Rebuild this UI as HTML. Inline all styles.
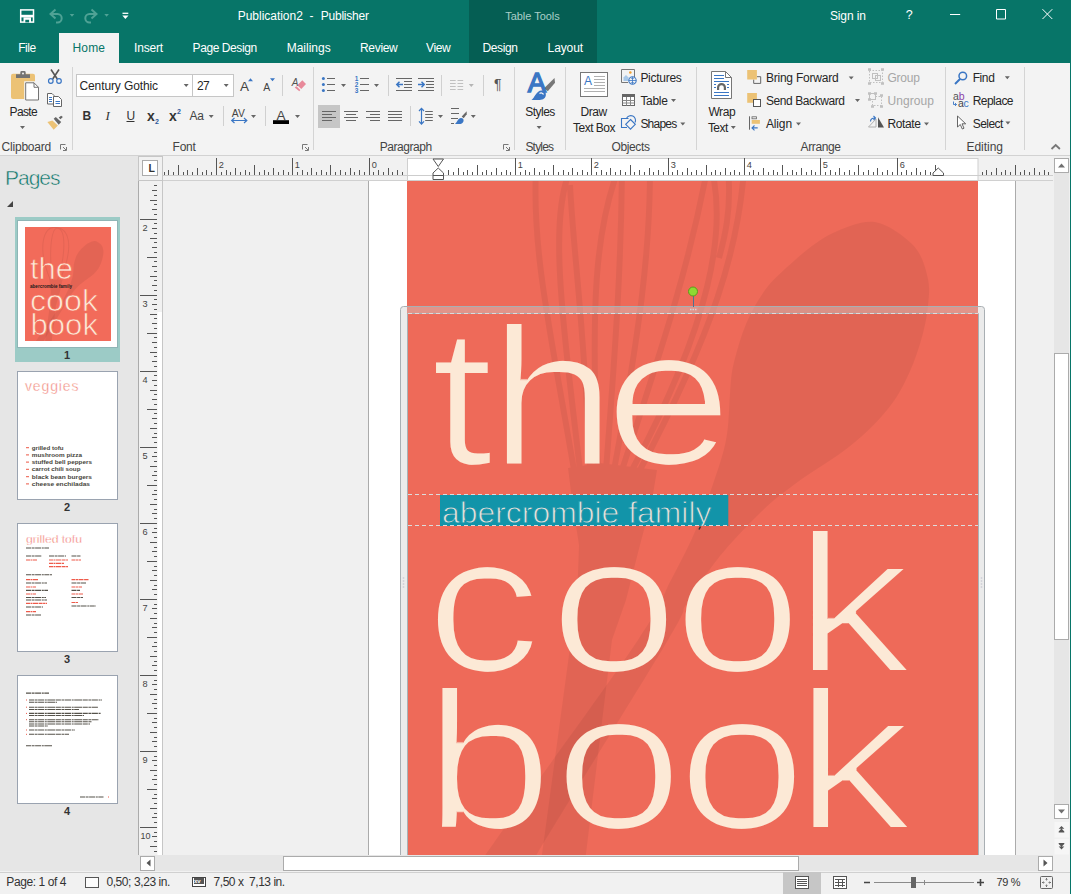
<!DOCTYPE html>
<html><head><meta charset="utf-8"><title>Publication2 - Publisher</title>
<style>
*{box-sizing:border-box;margin:0;padding:0}
html,body{width:1071px;height:894px;overflow:hidden;background:#f1f1f1;font-family:"Liberation Sans",sans-serif;font-size:12px;color:#262626}
.a{position:absolute}
.t{position:absolute;white-space:nowrap;line-height:1}
#title{left:0;top:0;width:1071px;height:63px;background:#077568}
#tt{left:469px;top:0;width:128px;height:63px;background:#055e53}
.w{color:#fff}
#hometab{left:59px;top:33px;width:60px;height:30px;background:#f3f3f3}
#ribbon{left:0;top:63px;width:1071px;height:92px;background:#f3f3f3}
#ribline{left:0;top:155px;width:1071px;height:1px;background:#d2d2d2}
.sep{position:absolute;width:1px;background:#d4d4d4;top:67px;height:83px}
.gl{position:absolute;white-space:nowrap;line-height:1;font-size:12px;color:#444;top:141px;transform:translateX(-50%)}
.rb{font-size:12.5px;color:#262626}
.dis{color:#a6a6a6}
#pages{left:0;top:156px;width:138px;height:715px;background:#e6e6e6}
#work{left:138px;top:156px;width:933px;height:715px;background:#f0f0f0}
#status{left:0;top:871px;width:1071px;height:23px;background:#f1f1f1}
</style></head><body>
<!-- TITLE BAR -->
<div id="title" class="a"></div>
<div id="tt" class="a"></div>
<!-- TABS -->
<div id="hometab" class="a"></div>
<!-- RIBBON -->
<div id="ribbon" class="a"></div>
<div id="ribline" class="a"></div>
<div class="a" style="left:76px;top:74px;width:117px;height:23px;background:#fff;border:1px solid #c6c6c6"></div>
<div class="a" style="left:192px;top:74px;width:42px;height:23px;background:#fff;border:1px solid #c6c6c6"></div>
<div class="a" style="left:318px;top:105px;width:22px;height:23px;background:#c6c6c6"></div>
<svg class="a" style="left:0;top:0" width="1071" height="156" viewBox="0 0 1071 156">
<path d="M20.0 126.0h5l-2.500 3zM183.7 84.0h5l-2.500 3zM223.7 84.0h5l-2.500 3zM208.7 115.1h5l-2.500 3zM251.0 115.1h5l-2.500 3zM295.0 115.1h5l-2.500 3zM341.0 83.9h5l-2.500 3zM374.0 83.9h5l-2.500 3zM438.0 115.1h5l-2.500 3zM470.8 115.1h5l-2.500 3zM536.6 126.0h5l-2.500 3zM671.0 99.1h5l-2.500 3zM680.3 122.5h5l-2.500 3zM730.8 126.0h5l-2.500 3zM848.7 76.5h5l-2.500 3zM855.0 99.1h5l-2.500 3zM796.0 122.5h5l-2.500 3zM924.0 122.5h5l-2.500 3zM1004.8 76.2h5l-2.500 3zM1005.4 121.5h5l-2.500 3z" fill="#666"/>
<path d="M468.800 84h5l-2.500 3z" fill="#b5b5b5"/>
<g fill="none" stroke-linecap="butt">
<!-- paste -->
<rect x="11" y="73.700" width="24" height="25.300" rx="2" fill="#ecc275"/>
<path d="M16 74.300h4.300v-1.800a1.400 1.400 0 0 1 1.400-1.400h2.600a1.400 1.400 0 0 1 1.400 1.400v1.800h4.300v3.800h-14z" fill="#737373"/>
<circle cx="23" cy="73.600" r="1" fill="#f3f3f3"/>
<path d="M24.200 81.300h10.800l5 5v15.200h-15.800z" fill="#f3f3f3"/>
<path d="M25.700 82.800h8.300l4.500 4.500v12.700h-12.800z" fill="#fff" stroke="#737373"/>
<path d="M34 82.800v4.500h4.500" stroke="#737373"/>
<!-- cut -->
<path d="M51 69.500l6.300 9.500M59 69.500l-6.300 9.500" stroke="#555" stroke-width="1.600"/>
<circle cx="50.800" cy="81" r="2.300" stroke="#3a76c4" stroke-width="1.200"/>
<circle cx="59" cy="81" r="2.300" stroke="#3a76c4" stroke-width="1.200"/>
<!-- copy -->
<path d="M47.500 93.500h4.500l2 2v8.500h-6.500z" fill="#fff" stroke="#666"/>
<path d="M53.500 96.500h5l3 3v7h-8z" fill="#fff" stroke="#666"/>
<path d="M49 97.500h3M49 99.500h3M49 101.500h3M55.500 101.500h4.500M55.500 103.500h4.500" stroke="#3a76c4"/>
<!-- format painter -->
<path d="M47.400 122.100l6.300 7.600 4.200-4.200-5.500-5z" fill="#ecc275"/>
<path d="M53.700 118.800l5 5.900 2.500-2.600-5.400-5z" fill="#666"/>
<path d="M58.700 117.500l1.700 1.700 2.500-2.100-1.700-1.400z" fill="#666"/>
<!-- launchers -->
<path d="M60.500 149.500v-5h5M63 147l3 3M66.500 147v3.500h-3.500M302.500 149.500v-5h5M305 147l3 3M308.500 147v3.500h-3.500M503.500 149.500v-5h5M506 147l3 3M509.500 147v3.500h-3.500" stroke="#777"/>
<!-- grow/shrink font triangles -->
<path d="M248 81.200l2.500-3 2.500 3zM270 78.200h5l-2.500 3z" fill="#3a76c4"/>
<!-- clear formatting eraser -->
<path d="M302.300 80.300l3.700 3.700-4.700 5-4-3.800z" fill="#e8899a"/>
<path d="M296.400 86.300l3.900 3.700-1 1.200-4.600-3.800z" fill="#e8899a"/>
<!-- AV arrow -->
<path d="M232 120.500h14.500M234.500 118l-2.800 2.500 2.800 2.500M244 118l2.800 2.500-2.800 2.500" stroke="#3a76c4" stroke-width="1.200"/>
<!-- font color bar -->
<rect x="273" y="120.200" width="16" height="3.800" fill="#000"/>
<!-- bullets -->
<circle cx="323.400" cy="78.500" r="1.500" fill="#3a76c4"/><circle cx="323.400" cy="84.500" r="1.500" fill="#3a76c4"/><circle cx="323.400" cy="90.500" r="1.500" fill="#3a76c4"/>
<path d="M327 78.500h8M327 84.500h8M327 90.500h8M360 78.500h9M360 84.500h9M360 90.500h9" stroke="#666"/>
<!-- decrease indent -->
<path d="M396 78.500h16M404 81.500h8M404 84.500h8M404 87.500h8M396 90.500h16M418 78.500h16M426 81.500h8M426 84.500h8M426 87.500h8M418 90.500h16" stroke="#666"/>
<path d="M397 84.500h6M399.500 81.800l-2.700 2.700 2.700 2.700M418 84.500h6M421.500 81.800l2.700 2.700-2.700 2.700" stroke="#3a76c4" stroke-width="1.500"/>
<!-- columns disabled -->
<path d="M450 80.500h5.700M450 83.500h5.700M450 86.500h5.700M450 89.500h5.700M457.500 80.500h5.700M457.500 83.500h5.700M457.500 86.500h5.700M457.500 89.500h5.700" stroke="#c0c0c0"/>
<!-- align icons -->
<path d="M322 111.500h14M322 114.500h10M322 117.500h14M322 120.500h10M344 111.500h14M346 114.500h10M344 117.500h14M346 120.500h10M366 111.500h14M370 114.500h10M366 117.500h14M370 120.500h10M388 111.500h14M388 114.500h14M388 117.500h14M388 120.500h14" stroke="#666"/>
<!-- line spacing -->
<path d="M425.200 111.500h7.600M425.200 114.500h7.600M425.200 117.500h7.600M425.200 120.500h7.600" stroke="#666"/>
<path d="M421.500 108.500v15.500M419 111l2.500-2.700 2.500 2.700M419 121.300l2.500 2.700 2.500-2.700" stroke="#3a76c4" stroke-width="1.200"/>
<!-- shading -->
<path d="M451 108.500h8M451 113.500h8M451 118.500h7M451 123.500h3" stroke="#666"/>
<path d="M466.700 111.200l-5 5.300 2 1.800 3-4z" fill="#666"/>
<path d="M455 124c2-1.500 3-6 6-6 2 0 3 1.500 2.500 3.200-0.500 2-2.500 2.800-4.500 2.800z" fill="#3a76c4"/>
<!-- styles big icon -->
<path d="M554.500 78l.5 4.800-7.200 8.500-3.700-3z" fill="#777"/>
<path d="M531.500 100c3-2 5-9.500 10-9.500 3.500 0 5 2.500 4.200 5.500-0.800 3-3.700 4-7.200 4z" fill="#3a76c4"/>
<path d="M539.500 93.500c1.500-1 3.500-0.500 4 1" stroke="#f3f3f3" stroke-width="1.200"/>
<!-- draw text box -->
<rect x="580.500" y="72.500" width="27" height="24" fill="#fff" stroke="#777"/>
<path d="M594 76.500h11M594 79.500h11M594 82.500h11M594 85.500h11M584 88.500h21M584 91.500h21" stroke="#b0b0b0"/>
<!-- pictures -->
<path d="M621.500 69.500h13v8M628 82.500h-6.500v-13" stroke="#777"/>
<circle cx="630.300" cy="72.500" r="1.300" fill="#f0a030"/>
<path d="M623.500 81v-3.500l2.500-2.500 2.500 2.500v3.500z" fill="#a8c8e8"/>
<circle cx="632.500" cy="80.500" r="3.700" fill="#f3f3f3" stroke="#3a76c4" stroke-width="1.100"/>
<path d="M629 80.500h7M632.500 77v7M630.500 77.800c1.300 1 2.800 1 4 0M630.500 83.200c1.300-1 2.800-1 4 0" stroke="#3a76c4" stroke-width=".8"/>
<!-- table -->
<rect x="622.500" y="94.500" width="12" height="11" fill="#fff" stroke="#666"/>
<rect x="622" y="94" width="13" height="3" fill="#666"/>
<path d="M622.500 100.500h12M622.500 103h12M626.500 97v8.500M630.500 97v8.500" stroke="#888"/>
<!-- shapes -->
<path d="M627 127.500h-5.500v-9h7" stroke="#3a76c4" stroke-width="1.100"/>
<path d="M626.500 118.500a4.700 4.700 0 1 1 8.500 4" stroke="#3a76c4" stroke-width="1.100"/>
<path d="M630.500 119.500l4.800 4.800-4.800 4.800-4.800-4.800z" fill="#f3f3f3" stroke="#3a76c4" stroke-width="1.100"/>
<!-- wrap text -->
<path d="M711.500 71.500h14l6 6v21h-20z" fill="#fff" stroke="#777"/>
<path d="M725.500 71.500v6h6" stroke="#777"/>
<path d="M714 75.500h10M714 78.500h10M714 81.500h15M714 92.500h15M714 95.500h15M714 84.500h2M727 84.500h2M714 87.500h2M727 87.500h2" stroke="#3a76c4"/>
<path d="M717 90v-2.500a4.500 4.500 0 0 1 9 0V90h-2.200v-2.500a2.300 2.300 0 0 0-4.600 0V90z" fill="#666"/>
<!-- bring forward -->
<path d="M757 76.700h3.700v6.700h-7v-3.900" stroke="#666"/>
<rect x="747.200" y="70" width="9.700" height="9.500" fill="#ecc275"/>
<!-- send backward -->
<rect x="747.200" y="93" width="9.700" height="9.800" fill="#ecc275"/>
<rect x="753.500" y="99.500" width="7" height="7" fill="#fff" stroke="#555"/>
<!-- align -->
<path d="M749.500 116.300v13.400" stroke="#666"/>
<rect x="752" y="116.800" width="4.500" height="2" stroke="#666" stroke-width=".8"/>
<rect x="751.700" y="120" width="8.200" height="3.800" fill="#ecc275"/>
<path d="M752 127.900h5.700M754.500 125.500l-2.500 2.400 2.500 2.400" stroke="#3a76c4" stroke-width="1.100"/>
<!-- group (disabled) -->
<g stroke="#c0c0c0">
<rect x="869.500" y="70.500" width="13" height="12" stroke-dasharray="1.500 1.500"/>
<rect x="872.500" y="73.500" width="5" height="5"/><rect x="875.500" y="75.500" width="5" height="5"/>
<path d="M868 69.500h3M881 69.500h3M868 83.500h3M881 83.500h3" stroke-width="2.500"/>
<rect x="872.500" y="96.500" width="9" height="9" stroke-dasharray="1.500 1.500"/>
<rect x="869.500" y="93.500" width="6" height="6" fill="#f3f3f3"/>
<path d="M868 93.500h3M874 93.500h3M868 99.500h3M880 95.500h3M871 106.500h3M880 106.500h3" stroke-width="2.500"/>
</g>
<!-- rotate -->
<path d="M876 127h-7.500l7.500-8z" stroke="#b0b0b0"/>
<path d="M878 127.500h6l-6-10.300z" fill="#555"/>
<path d="M870.500 121.500c0-2.500 2-3.500 4.500-3.500M873.500 116l2 2-2 2" stroke="#3a76c4" stroke-width="1.100"/>
<!-- find -->
<circle cx="962.800" cy="76" r="3.800" stroke="#3a76c4" stroke-width="1.500"/>
<path d="M960 79l-5 5" stroke="#3a76c4" stroke-width="2"/>
<!-- replace arrow -->
<path d="M953.500 101.500v3h3M955 103l1.500 1.500-1.500 1.500" stroke="#3a76c4" stroke-width=".9"/>
<!-- select -->
<path d="M957.500 116v11l2.800-2.500 2 4.500 1.700-0.800-2-4.400h3.700z" fill="#fff" stroke="#555" stroke-width=".9"/>
<!-- collapse caret -->
<path d="M1051.500 149l4.200-4 4.200 4" stroke="#777" stroke-width="1.800"/>
</g>
<g font-family="Liberation Sans, sans-serif" font-size="6.500" font-weight="bold" fill="#3a76c4"><text x="354.700" y="80.800">1</text><text x="354.700" y="86.800">2</text><text x="354.700" y="92.800">3</text></g>
<g fill="none">
<!-- save -->
<rect x="20.700" y="9.900" width="12.800" height="12.200" stroke="#fff" stroke-width="1.500"/>
<rect x="20.700" y="14.800" width="12.800" height="2.600" fill="#fff"/>
<path d="M23.500 17.400h7.500v4.700h-7.500z" fill="#fff"/>
<rect x="25.300" y="19.800" width="3.800" height="2.600" fill="#077568"/>
<!-- undo/redo -->
<path d="M55.500 9.500l-5 4.500 5 4.500M51 14h6.500a4.200 4.200 0 0 1 0 8.400h-1.500" stroke="#4fa295" stroke-width="2"/>
<path d="M91.500 9.500l5 4.500-5 4.500M96 14h-6.500a4.200 4.200 0 0 0 0 8.400h1.500" stroke="#4fa295" stroke-width="2"/>
<path d="M69.700 14h4.600l-2.300 2.800zM104.300 14h4.600l-2.300 2.800z" fill="#4fa295"/>
<path d="M122.500 13.300h5.800" stroke="#fff" stroke-width="1.300"/>
<path d="M122.300 15.600h6.200l-3.100 3.300z" fill="#fff"/>
<!-- window controls -->
<path d="M950 14.500h10.200M996.500 9.500h9v9.500h-9zM1042.500 9.200l9.800 9.800M1052.300 9.200l-9.800 9.800" stroke="#fff" stroke-width="1"/>
</g>

</svg>
<div class="sep" style="left:72px"></div>
<div class="sep" style="left:313px"></div>
<div class="sep" style="left:514px"></div>
<div class="sep" style="left:565px"></div>
<div class="sep" style="left:696px"></div>
<div class="sep" style="left:945px"></div>
<div class="sep" style="left:1024px"></div>
<div class="a" style="left:282px;top:75px;width:1px;height:21px;background:#d0d0d0"></div>
<div class="a" style="left:388px;top:75px;width:1px;height:21px;background:#d0d0d0"></div>
<div class="a" style="left:441px;top:75px;width:1px;height:21px;background:#d0d0d0"></div>
<div class="a" style="left:483px;top:75px;width:1px;height:21px;background:#d0d0d0"></div>
<div class="a" style="left:223px;top:106px;width:1px;height:20px;background:#d0d0d0"></div>
<div class="a" style="left:265px;top:106px;width:1px;height:20px;background:#d0d0d0"></div>
<div class="a" style="left:410px;top:106px;width:1px;height:20px;background:#d0d0d0"></div>
<div class="t" style="left:237.7px;top:10.1px;font-size:12px;color:#fff;letter-spacing:-0.02px;">Publication2</div>
<div class="t" style="left:309.5px;top:10.1px;font-size:12px;color:#fff;letter-spacing:-0.20px;">-</div>
<div class="t" style="left:320.8px;top:10.1px;font-size:12px;color:#fff;letter-spacing:-0.24px;">Publisher</div>
<div class="t" style="left:505.2px;top:10.9px;font-size:11px;color:#a9cfc8;letter-spacing:-0.03px;">Table Tools</div>
<div class="t" style="left:829.9px;top:9.7px;font-size:12px;color:#fff;letter-spacing:-0.11px;">Sign in</div>
<div class="t" style="left:905.8px;top:9.3px;font-size:12.5px;color:#fff;letter-spacing:-1.45px;">?</div>
<div class="t" style="left:18.2px;top:42.0px;font-size:12px;color:#fff;letter-spacing:-0.43px;">File</div>
<div class="t" style="left:72.5px;top:42.0px;font-size:12px;color:#077568;letter-spacing:0.15px;">Home</div>
<div class="t" style="left:134.1px;top:42.0px;font-size:12px;color:#fff;letter-spacing:-0.20px;">Insert</div>
<div class="t" style="left:192.6px;top:42.0px;font-size:12px;color:#fff;letter-spacing:-0.42px;">Page Design</div>
<div class="t" style="left:286.7px;top:42.0px;font-size:12px;color:#fff;letter-spacing:-0.01px;">Mailings</div>
<div class="t" style="left:360.0px;top:42.0px;font-size:12px;color:#fff;letter-spacing:-0.32px;">Review</div>
<div class="t" style="left:426.1px;top:42.0px;font-size:12px;color:#fff;letter-spacing:-0.40px;">View</div>
<div class="t" style="left:482.4px;top:42.0px;font-size:12px;color:#fff;letter-spacing:-0.36px;">Design</div>
<div class="t" style="left:547.6px;top:42.0px;font-size:12px;color:#fff;letter-spacing:-0.12px;">Layout</div>
<div class="t" style="left:1.6px;top:141.0px;font-size:12px;color:#444;letter-spacing:-0.22px;">Clipboard</div>
<div class="t" style="left:172.6px;top:141.0px;font-size:12px;color:#444;letter-spacing:-0.25px;">Font</div>
<div class="t" style="left:379.7px;top:141.0px;font-size:12px;color:#444;letter-spacing:-0.45px;">Paragraph</div>
<div class="t" style="left:525.4px;top:141.0px;font-size:12px;color:#444;letter-spacing:-0.80px;">Styles</div>
<div class="t" style="left:611.5px;top:141.0px;font-size:12px;color:#444;letter-spacing:-0.38px;">Objects</div>
<div class="t" style="left:800.5px;top:141.0px;font-size:12px;color:#444;letter-spacing:-0.37px;">Arrange</div>
<div class="t" style="left:966.5px;top:141.0px;font-size:12px;color:#444;letter-spacing:-0.03px;">Editing</div>
<div class="t" style="left:9.6px;top:106.1px;font-size:12px;color:#262626;letter-spacing:-0.68px;">Paste</div>
<div class="t" style="left:79.5px;top:80.2px;font-size:12px;color:#262626;letter-spacing:-0.11px;">Century Gothic</div>
<div class="t" style="left:197.0px;top:80.2px;font-size:12px;color:#262626;letter-spacing:-0.67px;">27</div>
<div class="t" style="left:82.5px;top:110.2px;font-size:12px;color:#333;letter-spacing:-1.17px;font-weight:bold;">B</div>
<div class="t" style="left:105.5px;top:109.4px;font-size:13px;color:#333;letter-spacing:0.89px;font-style:italic;font-family:&quot;Liberation Serif&quot;,serif;">I</div>
<div class="t" style="left:126.5px;top:109.7px;font-size:12px;color:#333;letter-spacing:-0.67px;text-decoration:underline;">U</div>
<div class="t" style="left:147.0px;top:108.5px;font-size:14px;color:#333;letter-spacing:-0.79px;font-weight:bold;">x</div>
<div class="t" style="left:155.0px;top:117.5px;font-size:7px;color:#2b579a;letter-spacing:-0.19px;font-weight:bold;">2</div>
<div class="t" style="left:169.0px;top:108.5px;font-size:14px;color:#333;letter-spacing:-0.79px;font-weight:bold;">x</div>
<div class="t" style="left:177.0px;top:108.0px;font-size:7px;color:#2b579a;letter-spacing:-0.39px;font-weight:bold;">2</div>
<div class="t" style="left:189.5px;top:110.2px;font-size:12px;color:#444;letter-spacing:-0.24px;">Aa</div>
<div class="t" style="left:231.7px;top:108.5px;font-size:10.3px;color:#444;letter-spacing:0.16px;">AV</div>
<div class="t" style="left:240.1px;top:79.8px;font-size:13.5px;color:#444;letter-spacing:0.60px;">A</div>
<div class="t" style="left:263.2px;top:82.3px;font-size:10.5px;color:#444;letter-spacing:0.60px;">A</div>
<div class="t" style="left:276.6px;top:108.8px;font-size:13.5px;color:#444;letter-spacing:0.30px;">A</div>
<div class="t" style="left:291.8px;top:78.1px;font-size:10px;color:#555;letter-spacing:-0.47px;font-style:italic;">A</div>
<div class="t" style="left:527.7px;top:68.8px;font-size:27.5px;color:#3a76c4;letter-spacing:-0.74px;-webkit-text-stroke:1.4px #3a76c4;">A</div>
<div class="t" style="left:584.0px;top:75.1px;font-size:12px;color:#3a76c4;letter-spacing:-0.30px;">A</div>
<div class="t" style="left:525.3px;top:106.2px;font-size:12px;color:#262626;letter-spacing:-0.53px;">Styles</div>
<div class="t" style="left:580.5px;top:106.2px;font-size:12px;color:#262626;letter-spacing:-0.48px;">Draw</div>
<div class="t" style="left:573.0px;top:121.6px;font-size:12px;color:#262626;letter-spacing:-0.50px;">Text Box</div>
<div class="t" style="left:640.4px;top:72.1px;font-size:12px;color:#262626;letter-spacing:-0.28px;">Pictures</div>
<div class="t" style="left:640.4px;top:94.9px;font-size:12px;color:#262626;letter-spacing:-0.30px;">Table</div>
<div class="t" style="left:640.4px;top:117.7px;font-size:12px;color:#262626;letter-spacing:-0.77px;">Shapes</div>
<div class="t" style="left:708.4px;top:106.2px;font-size:12px;color:#262626;letter-spacing:-0.39px;">Wrap</div>
<div class="t" style="left:707.9px;top:121.6px;font-size:12px;color:#262626;letter-spacing:-0.53px;">Text</div>
<div class="t" style="left:765.9px;top:72.1px;font-size:12px;color:#262626;letter-spacing:-0.22px;">Bring Forward</div>
<div class="t" style="left:765.9px;top:94.9px;font-size:12px;color:#262626;letter-spacing:-0.41px;">Send Backward</div>
<div class="t" style="left:765.9px;top:117.7px;font-size:12px;color:#262626;letter-spacing:-0.12px;">Align</div>
<div class="t" style="left:887.4px;top:72.1px;font-size:12px;color:#a6a6a6;letter-spacing:-0.23px;">Group</div>
<div class="t" style="left:887.4px;top:94.9px;font-size:12px;color:#a6a6a6;letter-spacing:0.08px;">Ungroup</div>
<div class="t" style="left:887.4px;top:117.7px;font-size:12px;color:#262626;letter-spacing:-0.38px;">Rotate</div>
<div class="t" style="left:972.7px;top:72.1px;font-size:12px;color:#262626;letter-spacing:-0.41px;">Find</div>
<div class="t" style="left:972.7px;top:94.9px;font-size:12px;color:#262626;letter-spacing:-0.53px;">Replace</div>
<div class="t" style="left:972.7px;top:117.7px;font-size:12px;color:#262626;letter-spacing:-0.54px;">Select</div>
<div class="t" style="left:953.0px;top:91.0px;font-size:10.5px;color:#555;letter-spacing:-0.14px;">a</div>
<div class="t" style="left:958.7px;top:91.0px;font-size:10.5px;color:#8b3fa8;letter-spacing:-0.14px;">b</div>
<div class="t" style="left:957.9px;top:98.0px;font-size:10.5px;color:#444;letter-spacing:-0.14px;">a</div>
<div class="t" style="left:963.6px;top:98.0px;font-size:10.5px;color:#3a76c4;letter-spacing:-0.15px;">c</div>
<div class="t" style="left:494.0px;top:77.3px;font-size:14px;color:#555;letter-spacing:2.48px;">¶</div>
<!-- PAGES PANEL -->
<div id="pages" class="a"></div>
<div class="t" style="left:5px;top:167px;font-size:21px;color:#0b7468;letter-spacing:-1px;-webkit-text-stroke:.5px #e6e6e6">Pages</div>
<svg class="a" style="left:0;top:156px" width="138" height="715" viewBox="0 156 138 715">
<path d="M13 201v6h-6z" fill="#444"/>
<rect x="15" y="217" width="105" height="145" fill="#9ccbc6"/>
<rect x="17.5" y="220.500" width="100" height="127" fill="#fff" stroke="#8fb5b6"/>
<rect x="25" y="227" width="86" height="114" fill="#f26b5a"/>
<clipPath id="tc"><rect x="25" y="227" width="86" height="114"/></clipPath><g clip-path="url(#tc)"><g transform="translate(-36.106 206.394) scale(0.1502 0.156)"><path d="M875 222C888 224 904 236 913 245C922 254 926 269 928 279C930 289 929 295 928 306C927 317 924 331 920 344C916 357 911 370 905 382C899 394 892 405 882 416C872 427 860 439 845 450C830 461 810 473 795 484C780 495 770 503 758 515C746 527 732 541 720 556C708 571 696 589 687 603C678 617 693 598 668 640C643 682 562 812 537 854C512 896 527 884 515 890C503 896 470 896 465 890C460 884 480 863 486 854C492 845 475 870 500 834C525 798 610 682 638 640C666 598 661 599 671 580C681 561 690 544 697 527C704 510 709 496 714 481C719 466 723 455 726 440C729 425 729 406 730 393C731 380 731 374 734 362C737 350 741 336 746 324C751 312 757 301 765 290C773 279 784 270 795 260C806 250 820 239 833 233C846 227 862 220 875 222Z" fill="#000" fill-opacity=".06"/><path d="M568 468L657 470L640 545L612 640L586 854L560 1100L520 1100L542 854L571 640L579 545Z" fill="#000" fill-opacity=".06"/><path d="M575 470C480 250 540 130 600 135C700 130 740 250 640 470M590 470C560 250 590 140 620 140C680 140 680 300 625 470" fill="none" stroke="#000" stroke-opacity=".06" stroke-width="7"/></g></g>
<g font-family="Liberation Sans, sans-serif" font-size="29.3" fill="#fce9d6" stroke="#f26b5a" stroke-width=".7">
<text x="30" y="278.7" textLength="43" lengthAdjust="spacingAndGlyphs">the</text>
<text x="30" y="311" textLength="68" lengthAdjust="spacingAndGlyphs">cook</text>
<text x="30.500" y="335.400" textLength="67.500" lengthAdjust="spacingAndGlyphs">book</text>
</g>
<text x="30" y="288" font-family="Liberation Sans, sans-serif" font-size="4.600" font-weight="bold" fill="#1a1a1a" textLength="42" lengthAdjust="spacingAndGlyphs">abercrombie family</text>
<rect x="17.500" y="371.5" width="100" height="128" fill="#fff" stroke="#9aa3b0"/>
<rect x="17.500" y="523.5" width="100" height="128" fill="#fff" stroke="#9aa3b0"/>
<rect x="17.500" y="675.5" width="100" height="128" fill="#fff" stroke="#9aa3b0"/>
<text x="25" y="391" font-family="Liberation Sans, sans-serif" font-size="14" fill="#f0786a" stroke="#fff" stroke-width=".4" textLength="53.500" lengthAdjust="spacing">veggies</text>
<g font-family="Liberation Sans, sans-serif" font-size="5.600" font-weight="bold" fill="#45443a">
<text x="31.800" y="449.5" textLength="31.7" lengthAdjust="spacingAndGlyphs">grilled tofu</text>
<text x="31.800" y="456.8" textLength="50.2" lengthAdjust="spacingAndGlyphs">mushroom pizza</text>
<text x="31.800" y="464.0" textLength="60.2" lengthAdjust="spacingAndGlyphs">stuffed bell peppers</text>
<text x="31.800" y="471.2" textLength="48.7" lengthAdjust="spacingAndGlyphs">carrot chili soup</text>
<text x="31.800" y="478.5" textLength="60.2" lengthAdjust="spacingAndGlyphs">black bean burgers</text>
<text x="31.800" y="485.8" textLength="58.2" lengthAdjust="spacingAndGlyphs">cheese enchiladas</text>
</g>
<path d="M26 447.7h3M26 454.9h3M26 462.2h3M26 469.4h3M26 476.7h3M26 483.9h3" stroke="#f0786a" stroke-width="1.2"/>
<text x="26" y="543.300" font-family="Liberation Sans, sans-serif" font-size="11.500" fill="#f0685a" stroke="#fff" stroke-width=".35" textLength="56" lengthAdjust="spacingAndGlyphs">grilled tofu</text>
<path d="M26 548H49M26 556H42M49 556H66M71.5 556H81M26 574.7H52M26 583H47M26 590.4H48M26 597.5H46M26 607H43M26 615H41M26 600H47M71.5 583H86M71.5 590.4H80M71.5 597.5H83M71.5 606H96" stroke="#55524a" stroke-width="1.100" stroke-dasharray="5 .6 3 .5 6 .7 2 .5" fill="none"/>
<path d="M26 560H37M49 560H68M71.5 560H81M49 563.3H64M49 566.6H68M26 579.7H38M26 587H36M26 594H36M26 603.4H47M26 611.6H36M71.5 579.7H89M71.5 587H82M71.5 594H83M71.5 602.5H78" stroke="#ee5a4a" stroke-width="1.200" stroke-dasharray="4 .5 2 .5 5 .6" fill="none"/>
<path d="M26 693.1H49M29 700H102M29 702.3H57M29 707.2H98M29 709.5H79M29 713.4H101M29 715.5H84M29 719.7H99M29 721.8H92M29 724H90M29 726H48M29 730H75M29 734.3H69M26 745.8H52M80 797H103.5" stroke="#55524a" stroke-width="1.100" stroke-dasharray="5 .6 3 .5 6 .7 2 .5 8 .6" fill="none"/>
<path d="M26 700h1M26 707.200h1M26 713.400h1M26 719.700h1M26 730h1M26 734.300h1M108 797h1" stroke="#ee5a4a" stroke-width="1"/>
<g font-family="Liberation Sans, sans-serif" font-size="11" font-weight="bold" fill="#333" text-anchor="middle">
<text x="67" y="359">1</text>
<text x="67" y="511">2</text>
<text x="67" y="663">3</text>
<text x="67" y="815">4</text>
</g>
</svg>
<!-- WORKSPACE -->
<div id="work" class="a"></div>
<!-- rulers frame -->
<div class="a" style="left:138px;top:156px;width:915px;height:25px;background:#f1f1f1;border-bottom:1px solid #d0d0d0"></div>
<div class="a" style="left:138px;top:156px;width:25px;height:699px;background:#f1f1f1;border-left:1px solid #ababab;border-right:1px solid #c6c6c6"></div>
<div class="a" style="left:138px;top:156px;width:25px;height:25px;background:#f1f1f1;border:1px solid #c6c6c6"></div>
<div class="a" style="left:142px;top:160px;width:16px;height:16px;background:#fff;border:1px solid #ababab"></div>
<div class="t" style="left:148.500px;top:162.500px;font-size:10.500px;font-weight:bold;color:#333">L</div>
<!-- canvas -->
<div class="a" style="left:163px;top:181px;width:890px;height:674px;background:#f0f0f0;overflow:hidden">
 <div class="a" style="left:205px;top:-1px;width:648px;height:700px;background:#fff;border:1px solid #ababab"></div>
</div>
<svg class="a" style="left:163px;top:181px" width="890" height="674" viewBox="163 181 890 674">
 <defs>
  <clipPath id="cp"><rect x="407" y="181" width="571" height="674"/></clipPath>
  <filter id="er" filterUnits="userSpaceOnUse" x="400" y="300" width="600" height="600"><feMorphology operator="erode" radius="3 1"/></filter>
 </defs>
 <rect x="407" y="181" width="571" height="674" fill="#ee6a59"/>
 <g clip-path="url(#cp)">
<!--SIL-->
  <g opacity=".05"><path d="M536 170C532 250 550 330 574 470M570 170C550 220 560 300 580 470M570 185C574 260 584 320 590 470M618 170C596 230 590 300 598 470M622 170C621 260 617 330 606 470M650 170C650 250 640 330 614 470M707 170C690 260 668 330 622 470M712 170C726 230 712 320 632 470M728 170C732 210 724 240 719 258M744 170C738 250 714 330 640 470" fill="none" stroke="#000" stroke-width="6"/>
  <path d="M568 468L600 463L657 470L652 500L640 545L626 600L612 640L586 854L582 890L538 890L542 854L571 640L577 600L579 545L572 500Z" fill="#000"/></g>
  <path d="M875 222C888 224 904 236 913 245C922 254 926 269 928 279C930 289 929 295 928 306C927 317 924 331 920 344C916 357 911 370 905 382C899 394 892 405 882 416C872 427 860 439 845 450C830 461 810 473 795 484C780 495 770 503 758 515C746 527 732 541 720 556C708 571 696 589 687 603C678 617 693 598 668 640C643 682 562 812 537 854C512 896 527 884 515 890C503 896 470 896 465 890C460 884 480 863 486 854C492 845 475 870 500 834C525 798 610 682 638 640C666 598 661 599 671 580C681 561 690 544 697 527C704 510 709 496 714 481C719 466 723 455 726 440C729 425 729 406 730 393C731 380 731 374 734 362C737 350 741 336 746 324C751 312 757 301 765 290C773 279 784 270 795 260C806 250 820 239 833 233C846 227 862 220 875 222Z" fill="#000" fill-opacity=".05"/>
<!--/SIL-->
 </g>
 <!-- big text -->
<!--BT--><g filter="url(#er)"><g font-family="Liberation Sans, sans-serif" font-size="195.31" fill="#fce9d6" transform="scale(1.1961 1)">
<text x="359.06 407.75 504.88" y="464.5">the</text>
<text x="355.31 458.91 562.42 664.06" y="671.0">cook</text>
<text x="354.20 462.92 566.01 664.56" y="827.8">book</text>
</g></g><!--/BT-->
<!--FRAME-->
 <g>
  <rect x="440" y="495" width="288.3" height="31" fill="#1294a9"/>
  <path d="M400.5 860V309.5a3 3 0 0 1 3-3H981.5a3 3 0 0 1 3 3V860H978V313.5H407.5V860Z" fill="#cfcfcf" fill-opacity=".42" stroke="none"/>
  <path d="M400.5 860V309.5a3 3 0 0 1 3-3H981.5a3 3 0 0 1 3 3V860" fill="none" stroke="#a9afb3"/>
  <path d="M407.5 860V313.5H978.5V860" fill="none" stroke="#aab1b5"/>
  <path d="M408 313.5H978M408 494.5H978M408 525.5H978" fill="none" stroke="#dcdcdc" stroke-dasharray="4 3"/>
  <path d="M693.5 296V307" stroke="#4f7190" fill="none"/>
  <circle cx="693" cy="291.5" r="4.5" fill="#8fd832" stroke="#5e9a1c"/>
  <path d="M403.500 577v2m0 1v2m0 1v2m0 1v2M981.500 577v2m0 1v2m0 1v2m0 1v2M690 309.500h1.500m1 0h1.500m1 0h1.500" stroke="#d4d4da" stroke-width="1.500" fill="none"/>
  <clipPath id="sc"><rect x="440" y="495" width="288.300" height="31"/></clipPath><text clip-path="url(#sc)" x="442" y="523.200" font-family="Liberation Sans, sans-serif" font-size="30.300" fill="#e4e0da" stroke="#1294a9" stroke-width=".9" textLength="269.500" lengthAdjust="spacingAndGlyphs">abercrombie family</text><path d="M700.500 526.500l-1.500 3" stroke="#333" stroke-width="1.500"/>
 </g>
<!--/FRAME-->
</svg>
<svg class="a" style="left:0;top:0" width="1071" height="894" viewBox="0 0 1071 894">
<rect x="407.500" y="158.500" width="570.500" height="22" fill="#fff" stroke="#cfcfcf"/>
<path d="M163 175.500H1053" stroke="#cdcdcd"/>
<rect x="157.5" y="312" width="4.5" height="543" fill="#fff"/>
<path d="M369.5 175v-17M364.5 175v-3M359.5 175v-5M354.5 175v-3M350.5 175v-7M345.5 175v-3M340.5 175v-5M335.5 175v-3M330.5 175v-10M326.5 175v-3M321.5 175v-5M316.5 175v-3M311.5 175v-7M307.5 175v-3M302.5 175v-5M297.5 175v-3M292.5 175v-17M288.5 175v-3M283.5 175v-5M278.5 175v-3M273.5 175v-7M268.5 175v-3M264.5 175v-5M259.5 175v-3M254.5 175v-10M249.5 175v-3M245.5 175v-5M240.5 175v-3M235.5 175v-7M230.5 175v-3M226.5 175v-5M221.5 175v-3M216.5 175v-17M211.5 175v-3M206.5 175v-5M202.5 175v-3M197.5 175v-7M192.5 175v-3M187.5 175v-5M183.5 175v-3M178.5 175v-10M173.5 175v-3M168.5 175v-5M164.5 175v-3M373.5 175v-3M378.5 175v-5M383.5 175v-3M388.5 175v-7M392.5 175v-3M397.5 175v-5M402.5 175v-3M448.5 175v-5M453.5 175v-3M458.5 175v-7M463.5 175v-3M467.5 175v-5M472.5 175v-3M477.5 175v-10M482.5 175v-3M486.5 175v-5M491.5 175v-3M496.5 175v-7M501.5 175v-3M506.5 175v-5M510.5 175v-3M515.5 175v-17M520.5 175v-3M525.5 175v-5M529.5 175v-3M534.5 175v-7M539.5 175v-3M544.5 175v-5M548.5 175v-3M553.5 175v-10M558.5 175v-3M563.5 175v-5M568.5 175v-3M572.5 175v-7M577.5 175v-3M582.5 175v-5M587.5 175v-3M591.5 175v-17M596.5 175v-3M601.5 175v-5M606.5 175v-3M610.5 175v-7M615.5 175v-3M620.5 175v-5M625.5 175v-3M630.5 175v-10M634.5 175v-3M639.5 175v-5M644.5 175v-3M649.5 175v-7M653.5 175v-3M658.5 175v-5M663.5 175v-3M668.5 175v-17M672.5 175v-3M677.5 175v-5M682.5 175v-3M687.5 175v-7M691.5 175v-3M696.5 175v-5M701.5 175v-3M706.5 175v-10M711.5 175v-3M715.5 175v-5M720.5 175v-3M725.5 175v-7M730.5 175v-3M734.5 175v-5M739.5 175v-3M744.5 175v-17M749.5 175v-3M753.5 175v-5M758.5 175v-3M763.5 175v-7M768.5 175v-3M773.5 175v-5M777.5 175v-3M782.5 175v-10M787.5 175v-3M792.5 175v-5M796.5 175v-3M801.5 175v-7M806.5 175v-3M811.5 175v-5M815.5 175v-3M820.5 175v-17M825.5 175v-3M830.5 175v-5M835.5 175v-3M839.5 175v-7M844.5 175v-3M849.5 175v-5M854.5 175v-3M858.5 175v-10M863.5 175v-3M868.5 175v-5M873.5 175v-3M877.5 175v-7M882.5 175v-3M887.5 175v-5M892.5 175v-3M897.5 175v-17M901.5 175v-3M906.5 175v-5M911.5 175v-3M916.5 175v-7M920.5 175v-3M925.5 175v-5M930.5 175v-3M935.5 175v-10M982.5 175v-3M986.5 175v-5M991.5 175v-3M996.5 175v-7M1001.5 175v-3M1005.5 175v-5M1010.5 175v-3M1015.5 175v-10M1020.5 175v-3M1024.5 175v-5M1029.5 175v-3M1034.5 175v-7M1039.5 175v-3M1044.5 175v-5M1048.5 175v-3M157 185.5h-3M157 190.5h-5M157 195.5h-3M157 200.5h-7M157 204.5h-3M157 209.5h-5M157 214.5h-3M157 219.5h-17M157 223.5h-3M157 228.5h-5M157 233.5h-3M157 238.5h-7M157 242.5h-3M157 247.5h-5M157 252.5h-3M157 257.5h-10M157 261.5h-3M157 266.5h-5M157 271.5h-3M157 276.5h-7M157 280.5h-3M157 285.5h-5M157 290.5h-3M157 295.5h-17M157 299.5h-3M157 304.5h-5M157 309.5h-3M157 314.5h-7M157 318.5h-3M157 323.5h-5M157 328.5h-3M157 333.5h-10M157 337.5h-3M157 342.5h-5M157 347.5h-3M157 352.5h-7M157 356.5h-3M157 361.5h-5M157 366.5h-3M157 371.5h-17M157 375.5h-3M157 380.5h-5M157 385.5h-3M157 390.5h-7M157 394.5h-3M157 399.5h-5M157 404.5h-3M157 409.5h-10M157 413.5h-3M157 418.5h-5M157 423.5h-3M157 428.5h-7M157 433.5h-3M157 437.5h-5M157 442.5h-3M157 447.5h-17M157 452.5h-3M157 456.5h-5M157 461.5h-3M157 466.5h-7M157 471.5h-3M157 475.5h-5M157 480.5h-3M157 485.5h-10M157 490.5h-3M157 494.5h-5M157 499.5h-3M157 504.5h-7M157 509.5h-3M157 513.5h-5M157 518.5h-3M157 523.5h-17M157 528.5h-3M157 532.5h-5M157 537.5h-3M157 542.5h-7M157 547.5h-3M157 551.5h-5M157 556.5h-3M157 561.5h-10M157 566.5h-3M157 570.5h-5M157 575.5h-3M157 580.5h-7M157 585.5h-3M157 589.5h-5M157 594.5h-3M157 599.5h-17M157 604.5h-3M157 608.5h-5M157 613.5h-3M157 618.5h-7M157 623.5h-3M157 627.5h-5M157 632.5h-3M157 637.5h-10M157 642.5h-3M157 646.5h-5M157 651.5h-3M157 656.5h-7M157 661.5h-3M157 665.5h-5M157 670.5h-3M157 675.5h-17M157 680.5h-3M157 684.5h-5M157 689.5h-3M157 694.5h-7M157 699.5h-3M157 703.5h-5M157 708.5h-3M157 713.5h-10M157 718.5h-3M157 722.5h-5M157 727.5h-3M157 732.5h-7M157 737.5h-3M157 741.5h-5M157 746.5h-3M157 751.5h-17M157 756.5h-3M157 760.5h-5M157 765.5h-3M157 770.5h-7M157 775.5h-3M157 779.5h-5M157 784.5h-3M157 789.5h-10M157 794.5h-3M157 798.5h-5M157 803.5h-3M157 808.5h-7M157 813.5h-3M157 817.5h-5M157 822.5h-3M157 827.5h-17M157 832.5h-3M157 836.5h-5M157 841.5h-3M157 846.5h-7M157 851.5h-3" stroke="#555" stroke-width="1" fill="none"/>
<path d="M433 159h10.500l-5.250 7.500zM438.250 168l5.250 5v2.500h-10.500v-2.500zM433 175.500h10.500v4h-10.500zM938.250 168l5.250 5v2.500h-10.500v-2.500z" fill="#fff" stroke="#555" stroke-width="1" stroke-linejoin="miter"/>
<g font-family="Liberation Sans, sans-serif" font-size="9.200" fill="#444">
<text x="371.8" y="168">0</text>
<text x="294.8" y="168">1</text>
<text x="218.8" y="168">2</text>
<text x="517.8" y="168">1</text>
<text x="593.8" y="168">2</text>
<text x="670.8" y="168">3</text>
<text x="746.8" y="168">4</text>
<text x="822.8" y="168">5</text>
<text x="899.8" y="168">6</text>
<text x="142.5" y="231.0">2</text>
<text x="142.5" y="307.0">3</text>
<text x="142.5" y="383.0">4</text>
<text x="142.5" y="459.0">5</text>
<text x="142.5" y="535.0">6</text>
<text x="142.5" y="611.0">7</text>
<text x="142.5" y="687.0">8</text>
<text x="142.5" y="763.0">9</text>
<text x="140.5" y="839.0" textLength="10" lengthAdjust="spacingAndGlyphs">10</text>
</g>
</svg>
<!-- vertical scrollbar -->
<div class="a" style="left:1053px;top:156px;width:18px;height:699px;background:#f0f0f0"></div>
<div class="a" style="left:1054px;top:172px;width:15px;height:632px;background:#e6e6e6"></div>
<div class="a" style="left:1054px;top:158px;width:15px;height:15px;background:#fff;border:1px solid #ababab"></div>
<div class="a" style="left:1054px;top:353px;width:15px;height:287px;background:#fff;border:1px solid #ababab"></div>
<div class="a" style="left:1054px;top:804px;width:15px;height:15px;background:#fff;border:1px solid #ababab"></div>
<svg class="a" style="left:1053px;top:156px" width="18" height="699" viewBox="1053 156 18 699">
 <path d="M1058 167.500l3.500-4 3.500 4zM1058 809.500l3.500 4 3.500-4z" fill="#707070"/>
 <rect x="1054.500" y="822" width="14.500" height="15.500" fill="#f6f6f6"/><rect x="1054.500" y="839" width="14.500" height="15.500" fill="#f6f6f6"/><path d="M1058.700 828.800l2.800-2.800 2.800 2.800zM1058.700 831.400l2.800-2.800 2.800 2.800zM1058.700 831.400h5.600v1h-5.600zM1058.700 843h5.600v1h-5.600zM1058.700 844l2.800 2.800 2.800-2.800zM1058.700 846.600l2.800 2.800 2.800-2.800z" fill="#555"/>
</svg>
<!-- horizontal scrollbar -->
<div class="a" style="left:138px;top:855px;width:933px;height:16px;background:#e6e6e6"></div>
<div class="a" style="left:1053px;top:855px;width:18px;height:16px;background:#f0f0f0"></div>
<div class="a" style="left:140px;top:856px;width:15px;height:15px;background:#fff;border:1px solid #ababab"></div>
<div class="a" style="left:1038px;top:856px;width:15px;height:15px;background:#fff;border:1px solid #ababab"></div>
<div class="a" style="left:283px;top:856px;width:516px;height:15px;background:#fff;border:1px solid #ababab"></div>
<svg class="a" style="left:138px;top:855px" width="933" height="16" viewBox="138 855 933 16">
 <path d="M1043.500 859.500l4 3.500-4 3.500zM150.500 859.500l-4 3.500 4 3.500z" fill="#555"/>
</svg>


<!-- STATUS -->
<div id="status" class="a"></div>
<div class="a" style="left:0;top:871.500px;width:1071px;height:1px;background:#d0d0d0"></div>
<div class="t" style="left:6.3px;top:876px;font-size:12px;color:#333;letter-spacing:-0.42px">Page: 1 of 4</div>
<div class="a" style="left:85px;top:877px;width:14px;height:11px;border:1px solid #555;background:#fcfcfc"></div>
<div class="t" style="left:106.4px;top:876px;font-size:12px;color:#333;letter-spacing:-0.41px">0,50; 3,23 in.</div>
<div class="a" style="left:192px;top:877px;width:14px;height:10px;border:1px solid #444;background:#fff"></div>
<div class="t" style="left:194px;top:878px;font-size:6px;font-weight:bold;color:#222;background:#555;color:#fff;width:10px;height:6px;line-height:6px;overflow:hidden">xv</div>
<div class="t" style="left:213.6px;top:876px;font-size:12px;color:#333;letter-spacing:-0.48px">7,50 x&nbsp; 7,13 in.</div>
<div class="a" style="left:783px;top:872px;width:38px;height:22px;background:#c6c6c6"></div>
<svg class="a" style="left:780px;top:872px" width="291" height="22" viewBox="780 872 291 22">
 <g fill="none" stroke="#555" stroke-width="1">
  <rect x="795.5" y="876.5" width="13" height="12" fill="#fff"/>
  <path d="M797 879.5h10M797 881.5h10M797 883.5h10M797 885.5h10"/>
  <rect x="833.5" y="876.5" width="13" height="12" fill="#fff"/>
  <path d="M835 879.5h10M835 882.5h10M835 885.5h10M838.5 879v8M842.5 879v8"/>
  <path d="M874 882.5h100M924.5 880v5" stroke="#8a8a8a"/>
  <path d="M864 882.5h6M977 882.5h7M980.5 879v7" stroke="#444" stroke-width="1.6"/>
  <rect x="911" y="877" width="5" height="11" fill="#666" stroke="none"/>
  <rect x="1040.500" y="876.500" width="12" height="12" rx="1" stroke="#666"/>
  <path d="M1046.500 878v2.500M1046.500 884.500v2.500M1042 882.500h2.500M1048.500 882.500h2.500M1045.500 879.500l1-1 1 1M1045.500 885.500l1 1 1-1M1043.500 881.500l-1 1 1 1M1049.500 881.500l1 1-1 1" stroke="#666" stroke-width=".8"/>
 </g>
</svg>
<div class="t" style="left:996.500px;top:877px;font-size:11px;color:#333;letter-spacing:-.35px">79 %</div>
<div class="a" style="left:1069.500px;top:63px;width:1.500px;height:831px;background:#077568"></div>

</body></html>
